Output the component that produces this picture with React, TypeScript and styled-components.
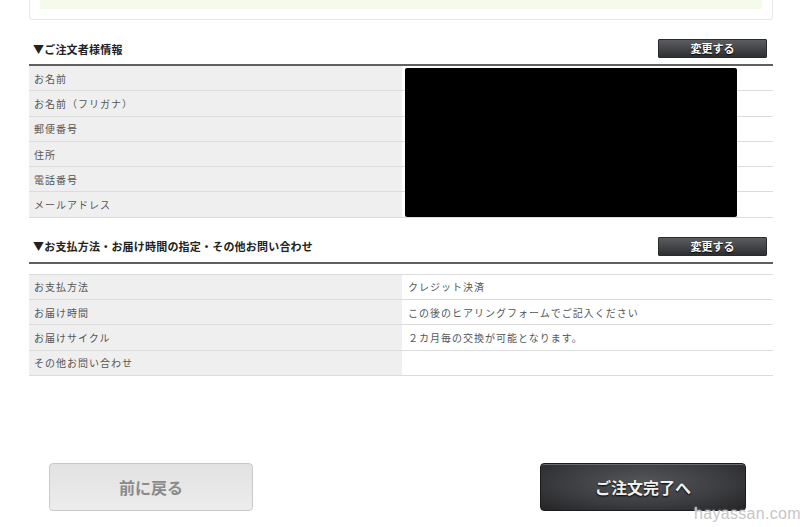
import React from "react";
import styled, { createGlobalStyle } from "styled-components";

const Global = createGlobalStyle`
  html, body { margin: 0; padding: 0; background: #fff; }
  body {
    width: 800px; height: 527px; overflow: hidden; position: relative;
    font-family: "Noto Sans CJK JP", "Noto Sans", sans-serif;
  }
`;

const Page = styled.div`
  width: 744px;
  margin-left: 29px;
`;

const TopCard = styled.div`
  margin-top: -10px;
  height: 30px;
  border: 1px solid #e6e6e6;
  border-radius: 3px;
  padding: 0 10px;
  box-sizing: border-box;
`;

const GreenArea = styled.div`
  height: 18px;
  background: #f4fbea;
`;

const Header = styled.div`
  display: flex;
  align-items: center;
  justify-content: space-between;
  margin-top: 19px;
  padding: 0 6px 6px 4px;
  border-bottom: 2px solid #606060;
`;

const Title = styled.h2`
  margin: 0;
  font-size: 11px;
  font-weight: bold;
  color: #222;
  letter-spacing: 0.2px;
`;

const SmallButton = styled.button`
  width: 109px;
  height: 19px;
  padding: 0;
  border: 1px solid #2a2a2a;
  border-radius: 1px;
  background: linear-gradient(#5c5d60, #2e2f31);
  color: #fff;
  font-family: inherit;
  font-size: 11px;
  font-weight: bold;
  line-height: 17px;
  text-shadow: 0 1px 1px #000;
`;

const Table = styled.div<{ $gap?: boolean }>`
  position: relative;
  display: grid;
  grid-template-columns: 373px 1fr;
  margin-top: ${(p) => (p.$gap ? "10px" : "0")};
  border-top: ${(p) => (p.$gap ? "1px solid #dcdcdc" : "none")};
`;

const Label = styled.div`
  height: 24.3px;
  background: #efefef;
  border-bottom: 1px solid #dcdcdc;
  display: flex;
  align-items: center;
  padding-left: 5px;
  font-size: 10px;
  letter-spacing: 1px;
  color: #555;
`;

const Value = styled(Label)`
  background: #fff;
  padding-left: 6px;
`;

const Redaction = styled.div`
  position: absolute;
  left: 376px;
  top: 2px;
  width: 332px;
  height: 149px;
  background: #000;
  border-radius: 2px;
`;

const Actions = styled.div`
  display: flex;
  justify-content: space-between;
  margin-top: 87px;
  padding: 0 27px 0 20px;
`;

const BigButton = styled.button<{ $dark?: boolean }>`
  width: ${(p) => (p.$dark ? "206px" : "204px")};
  height: 48px;
  border-radius: 4px;
  font-family: inherit;
  font-size: 16px;
  font-weight: bold;
  padding: 0;
  ${(p) =>
    p.$dark
      ? `
    border: 1px solid #1c1c1e;
    background: radial-gradient(ellipse at 50% 40%, #55565a 0%, #3a3b3e 60%, #242426 100%);
    box-shadow: inset 0 1px 0 #6a6b6e;
    color: #f0f0f0;
    text-shadow: 0 1px 2px #000;
  `
      : `
    border: 1px solid #c9c9c9;
    background: linear-gradient(#e2e2e2, #ececec);
    color: #8a8a8a;
  `}
`;

const Watermark = styled.div`
  position: absolute;
  left: 694px;
  top: 505px;
  font-family: "Liberation Sans", sans-serif;
  font-size: 16px;
  letter-spacing: 0.3px;
  color: #c6c6c6;
  text-shadow: 0 0 2px #fff;
`;

const customer = [
  "お名前",
  "お名前（フリガナ）",
  "郵便番号",
  "住所",
  "電話番号",
  "メールアドレス",
];

const payment: [string, string][] = [
  ["お支払方法", "クレジット決済"],
  ["お届け時間", "この後のヒアリングフォームでご記入ください"],
  ["お届けサイクル", "２カ月毎の交換が可能となります。"],
  ["その他お問い合わせ", ""],
];

export default function App() {
  return (
    <>
      <Global />
      <Page>
        <TopCard>
          <GreenArea />
        </TopCard>

        <Header>
          <Title>▼ご注文者様情報</Title>
          <SmallButton>変更する</SmallButton>
        </Header>
        <Table>
          {customer.map((l) => (
            <React.Fragment key={l}>
              <Label>{l}</Label>
              <Value />
            </React.Fragment>
          ))}
          <Redaction />
        </Table>

        <Header>
          <Title>▼お支払方法・お届け時間の指定・その他お問い合わせ</Title>
          <SmallButton>変更する</SmallButton>
        </Header>
        <Table $gap>
          {payment.map(([l, v]) => (
            <React.Fragment key={l}>
              <Label>{l}</Label>
              <Value>{v}</Value>
            </React.Fragment>
          ))}
        </Table>

        <Actions>
          <BigButton>前に戻る</BigButton>
          <BigButton $dark>ご注文完了へ</BigButton>
        </Actions>
      </Page>
      <Watermark>hayassan.com</Watermark>
    </>
  );
}
